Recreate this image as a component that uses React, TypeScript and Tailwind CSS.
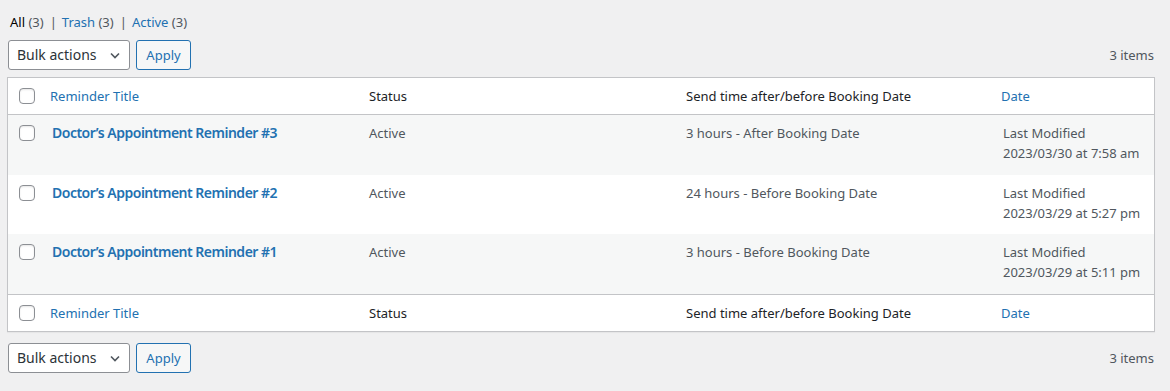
import React from "react";

const font = { fontFamily: '"Noto Sans", "Open Sans", sans-serif' };

function Check() {
  return (
    <span className="block w-4 h-4 rounded-[4px] border border-[#8c8f94] bg-white shadow-[inset_0_1px_2px_rgba(0,0,0,0.1)]" />
  );
}

function BulkBar() {
  return (
    <div className="flex items-center h-[30px]">
      <div className="flex items-center justify-between w-[122px] h-[30px] rounded-[3px] border border-[#8c8f94] bg-white pl-[8px] pr-[9px] text-[14px] text-[#2c3338]">
        <span>Bulk actions</span>
        <svg width="10" height="7" viewBox="0 0 10 7" fill="none">
          <path d="M1 1.5L5 5.5L9 1.5" stroke="#50575e" strokeWidth="1.6" />
        </svg>
      </div>
      <div className="ml-[6px] flex items-center justify-center w-[55px] h-[30px] rounded-[3px] border border-[#2271b1] bg-[#f6f7f7] text-[13px] text-[#2271b1]">
        Apply
      </div>
      <div className="ml-auto text-[13px] text-[#50575e] pr-[1px]">3 items</div>
    </div>
  );
}

const rows = [
  { t: "Doctor’s Appointment Reminder #3", s: "3 hours - After Booking Date", d: "2023/03/30 at 7:58 am", h: "h-[60px]", bg: "bg-[#f6f7f7]" },
  { t: "Doctor’s Appointment Reminder #2", s: "24 hours - Before Booking Date", d: "2023/03/29 at 5:27 pm", h: "h-[59px]", bg: "bg-white" },
  { t: "Doctor’s Appointment Reminder #1", s: "3 hours - Before Booking Date", d: "2023/03/29 at 5:11 pm", h: "h-[60px]", bg: "bg-[#f6f7f7]" },
];

function HeadRow({ foot }: { foot?: boolean }) {
  return (
    <div className={`flex items-center h-[37px] bg-white text-[13px] ${foot ? "border-t border-[#c3c4c7]" : "border-b border-[#c3c4c7]"}`}>
      <div className="w-[32px] pl-[11px] flex items-center"><Check /></div>
      <div className="w-[319px] pl-[10px] text-[#2271b1]">Reminder Title</div>
      <div className="w-[317px] pl-[10px] text-[#1d2327]">Status</div>
      <div className="w-[315px] pl-[10px] text-[#1d2327]">Send time after/before Booking Date</div>
      <div className="flex-1 pl-[10px] text-[#2271b1]">Date</div>
    </div>
  );
}

export default function App() {
  return (
    <div className="min-h-[391px] w-[1170px] bg-[#f0f0f1] leading-[20px]" style={font}>
      <div className="pl-[7px] w-[1155px]">
        <div className="pt-[12px] h-[40px] text-[13px] pl-[3px] text-[#50575e]">
          <span className="text-[#000]">All</span> <span>(3)</span>
          <span className="ml-[6px] mr-[5px] text-[#50575e]">|</span>
          <span className="text-[#2271b1]">Trash</span> <span>(3)</span>
          <span className="ml-[6px] mr-[5px] text-[#50575e]">|</span>
          <span className="text-[#2271b1]">Active</span> <span>(3)</span>
        </div>
        <div className="pl-[1px]">
          <BulkBar />
        </div>
        <div className="mt-[7px] border border-[#c3c4c7] bg-white shadow-[0_1px_1px_rgba(0,0,0,0.04)]">
          <HeadRow />
          {rows.map((r, i) => (
            <div key={i} className={`flex items-start ${r.h} ${r.bg} pt-[8px] text-[13px] text-[#50575e]`}>
              <div className="w-[32px] pl-[11px] pt-[2px]"><Check /></div>
              <div className="w-[319px] pl-[12px] text-[14px] font-semibold tracking-[-0.5px] text-[#2271b1]">{r.t}</div>
              <div className="w-[317px] pl-[10px]">Active</div>
              <div className="w-[315px] pl-[10px]">{r.s}</div>
              <div className="flex-1 pl-[12px]">
                <div>Last Modified</div>
                <div>{r.d}</div>
              </div>
            </div>
          ))}
          <HeadRow foot />
        </div>
        <div className="mt-[11px] pl-[1px]">
          <BulkBar />
        </div>
      </div>
    </div>
  );
}
